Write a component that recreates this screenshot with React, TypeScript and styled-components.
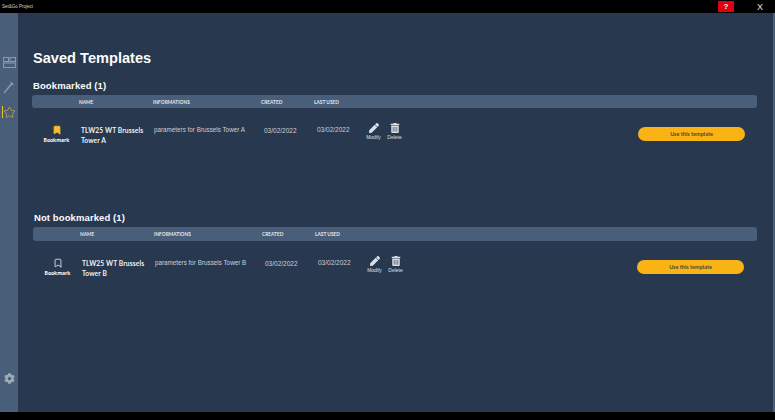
import { createGlobalStyle, styled } from "styled-components";
import { Bookmark, Star } from "lucide-react";
import { FaCog, FaPen, FaTrashAlt } from "react-icons/fa";

const GlobalStyle = createGlobalStyle`
  html, body {
    margin: 0;
    padding: 0;
    background: #28384f;
    overflow: hidden;
  }
  * {
    box-sizing: border-box;
  }
`;

const Window = styled.div`
  width: 775px;
  height: 420px;
  display: flex;
  flex-direction: column;
  background: #28384f;
  color: #fff;
  font-family: "Liberation Sans", Arial, sans-serif;
  opacity: 0.99;
`;

const TitleBar = styled.header`
  height: 13px;
  flex: none;
  background: #000;
  display: flex;
  align-items: center;
  padding: 0 12px 0 2px;
`;

const FooterBar = styled.footer`
  height: 8px;
  flex: none;
  background: #000;
`;

const AppName = styled.span`
  font-size: 4.5px;
  color: #d8d8d8;
  flex: 1;
`;

const HelpButton = styled.button`
  width: 16px;
  height: 11px;
  border: 0;
  padding: 0;
  background: #e5000f;
  color: #fff;
  font: bold 8px "Liberation Sans", Arial, sans-serif;
  margin-right: 23px;
`;

const CloseButton = styled.button`
  border: 0;
  padding: 0;
  background: none;
  color: #e4e4e4;
  font: 9px "Liberation Sans", Arial, sans-serif;
`;

const Body = styled.div`
  flex: 1;
  min-height: 0;
  display: flex;
`;

const Sidebar = styled.nav`
  width: 18px;
  flex: none;
  background: #4a5f7a;
  display: flex;
  flex-direction: column;
  align-items: center;
  padding: 42px 0 27px;
  gap: 11px;
`;

const NavItem = styled.div<{ $active?: boolean }>`
  position: relative;
  width: 18px;
  height: 14px;
  display: flex;
  align-items: center;
  justify-content: center;
  color: ${({ $active }) => ($active ? "#c9b65a" : "#8d9bad")};

  ${({ $active }) =>
    $active &&
    `&::before {
      content: "";
      position: absolute;
      left: 2px;
      top: 1px;
      width: 1px;
      height: 12px;
      background: #f2c230;
    }`}
`;

const SettingsItem = styled(NavItem)`
  margin-top: auto;
  color: #a3aebb;
`;

const Main = styled.main`
  flex: 1;
  min-width: 0;
  padding: 36px 16px 0 14px;
  border-right: 2px solid #4a5f7a;
`;

const PageTitle = styled.h1`
  margin: 0 0 0 1px;
  font-size: 14.6px;
  line-height: 18px;
  font-weight: 700;
`;

const Section = styled.section<{ $top: number; $inset: number }>`
  margin-top: ${({ $top }) => $top}px;
  padding-left: ${({ $inset }) => $inset}px;
`;

const SectionTitle = styled.h2`
  margin: 0 0 3px 1px;
  font-size: 9.5px;
  line-height: 13px;
  font-weight: 700;
  letter-spacing: 0.1px;
`;

const HeaderRow = styled.div<{ $height: number }>`
  height: ${({ $height }) => $height}px;
  background: #4a5f7a;
  border-radius: 3px;
  display: flex;
  align-items: center;
  padding-left: 47px;
  font-family: "Lato", sans-serif;
  font-size: 4.8px;
  font-weight: 700;
  color: #e6eaee;
`;

const HeaderCell = styled.div<{ $width: number }>`
  width: ${({ $width }) => $width}px;
  flex: none;
`;

const TemplateRow = styled.div`
  display: flex;
  align-items: flex-start;
  padding-top: 17px;
`;

const BookmarkCell = styled.div`
  width: 49px;
  flex: none;
  display: flex;
  flex-direction: column;
  align-items: center;
  gap: 2px;
  font-family: "Open Sans", sans-serif;
  font-size: 5px;
  font-weight: 700;
`;

const Name = styled.div`
  width: 73px;
  flex: none;
  font-family: "Lato", sans-serif;
  font-size: 6.7px;
  line-height: 10px;
  font-weight: 700;
  letter-spacing: 0.1px;
  color: #f2f4f6;
`;

const Info = styled.div`
  width: 110px;
  flex: none;
  font-size: 6.3px;
  line-height: 9px;
  color: #ced3da;
`;

const DateCell = styled.div<{ $width: number; $lift?: boolean }>`
  width: ${({ $width }) => $width}px;
  flex: none;
  font-size: 6.5px;
  line-height: 9px;
  color: #ced3da;
  padding-top: ${({ $lift }) => ($lift ? 0 : 1)}px;
`;

const Action = styled.button`
  width: 21px;
  flex: none;
  border: 0;
  padding: 0;
  background: none;
  color: #dfe3e8;
  display: flex;
  flex-direction: column;
  align-items: center;
  gap: 1px;
  font: 5px "Liberation Sans", Arial, sans-serif;
  margin-top: -2px;
`;

const UseButton = styled.button<{ $gap: number }>`
  width: 107px;
  height: 14px;
  flex: none;
  margin-left: auto;
  border: 0;
  border-radius: 7px;
  background: #fdb515;
  color: #4c4a3c;
  font-family: "Lato", sans-serif;
  font-size: 5.5px;
  font-weight: 700;
  margin-right: ${({ $gap }) => $gap}px;
  margin-top: 2px;
`;

function LayoutIcon() {
  return (
    <svg width="13" height="11" viewBox="0 0 13 11" fill="none" stroke="currentColor" strokeWidth="1">
      <rect x="0.5" y="0.5" width="5" height="4" />
      <rect x="7" y="0.5" width="5.5" height="4" />
      <rect x="0.5" y="6" width="12" height="4.5" />
    </svg>
  );
}

function WandIcon() {
  return (
    <svg width="12" height="14" viewBox="0 0 12 14" fill="none" stroke="currentColor" strokeLinecap="round">
      <path d="M1.5 12.5 8 4.5" strokeWidth="1.5" />
      <path d="M8 2.5 10 4.5M7.5 5l2-1.5" strokeWidth="1.2" />
    </svg>
  );
}

type Template = {
  name: string;
  info: string;
  date: string;
  bookmarked: boolean;
  buttonGap: number;
};

function TemplateLine({ template }: { template: Template }) {
  return (
    <TemplateRow>
      <BookmarkCell>
        <Bookmark
          size={10}
          color={template.bookmarked ? "#fbc02d" : "#e8ebef"}
          fill={template.bookmarked ? "#fbc02d" : "none"}
        />
        Bookmark
      </BookmarkCell>
      <Name>{template.name}</Name>
      <Info>{template.info}</Info>
      <DateCell $width={53}>{template.date}</DateCell>
      <DateCell $width={46} $lift>
        {template.date}
      </DateCell>
      <Action>
        <FaPen size={10} />
        Modify
      </Action>
      <Action>
        <FaTrashAlt size={10} />
        Delete
      </Action>
      <UseButton $gap={template.buttonGap}>Use this template</UseButton>
    </TemplateRow>
  );
}

export default function App() {
  return (
    <>
      <GlobalStyle />
      <Window>
        <TitleBar>
          <AppName>Set&amp;Go Project</AppName>
          <HelpButton>?</HelpButton>
          <CloseButton>X</CloseButton>
        </TitleBar>
        <Body>
          <Sidebar>
            <NavItem>
              <LayoutIcon />
            </NavItem>
            <NavItem>
              <WandIcon />
            </NavItem>
            <NavItem $active>
              <Star size={13} strokeWidth={1.3} />
            </NavItem>
            <SettingsItem>
              <FaCog size={11} />
            </SettingsItem>
          </Sidebar>
          <Main>
            <PageTitle>Saved Templates</PageTitle>
            <Section $top={12} $inset={0}>
              <SectionTitle>Bookmarked (1)</SectionTitle>
              <HeaderRow $height={13}>
                <HeaderCell $width={74}>NAME</HeaderCell>
                <HeaderCell $width={108}>INFORMATIONS</HeaderCell>
                <HeaderCell $width={53}>CREATED</HeaderCell>
                <HeaderCell $width={50}>LAST USED</HeaderCell>
              </HeaderRow>
              <TemplateLine
                template={{
                  name: "TLW25 WT Brussels Tower A",
                  info: "parameters for Brussels Tower A",
                  date: "03/02/2022",
                  bookmarked: true,
                  buttonGap: 12,
                }}
              />
            </Section>
            <Section $top={66} $inset={1}>
              <SectionTitle>Not bookmarked (1)</SectionTitle>
              <HeaderRow $height={14}>
                <HeaderCell $width={74}>NAME</HeaderCell>
                <HeaderCell $width={108}>INFORMATIONS</HeaderCell>
                <HeaderCell $width={53}>CREATED</HeaderCell>
                <HeaderCell $width={50}>LAST USED</HeaderCell>
              </HeaderRow>
              <TemplateLine
                template={{
                  name: "TLW25 WT Brussels Tower B",
                  info: "parameters for Brussels Tower B",
                  date: "03/02/2022",
                  bookmarked: false,
                  buttonGap: 13,
                }}
              />
            </Section>
          </Main>
        </Body>
        <FooterBar />
      </Window>
    </>
  );
}
